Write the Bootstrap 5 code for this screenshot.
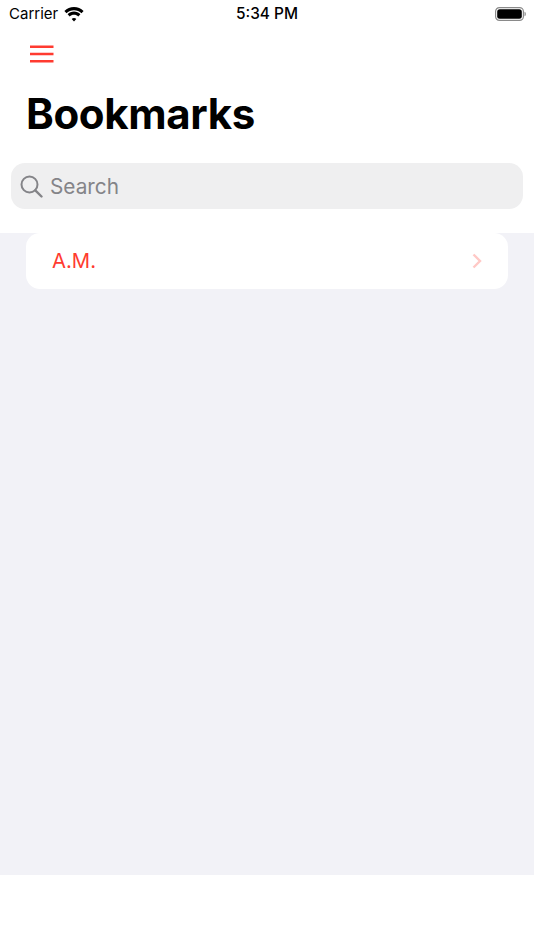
<!DOCTYPE html>
<html lang="en">
<head>
<meta charset="utf-8">
<title>Bookmarks</title>
<link href="https://cdn.jsdelivr.net/npm/bootstrap@5.3.0/dist/css/bootstrap.min.css" rel="stylesheet">
<style>
html,body{height:100%;margin:0;background:#fff;font-family:Inter,"Liberation Sans",sans-serif;overflow:hidden}
.app-frame{width:534px;height:950px}
.status-row{height:28px;padding:0 8px 0 9px;position:relative;color:#000}
.carrier{font-size:15px;line-height:28px}
.wifi-gap{gap:6px}
.clock{font-size:15.4px;font-weight:500;line-height:28px;position:absolute;left:0;right:0;text-align:center}
.menu-row{height:52px;padding:0 0 0 30px}
.title-text{font-size:42px;font-weight:700;line-height:50px;letter-spacing:-.35px;margin:0 0 0 26px;padding-top:9px;color:#000;height:83px}
.search-shell{margin:0 11px 24px;height:46px;background:#efeff0;border-radius:14px;padding-left:9px;color:#848488;font-size:20.8px}
.search-gap{gap:7px}
.search-label{padding-top:2px}
.list-zone{height:642px;background:#f2f2f7;padding:0 26px}
.bookmark-item{height:56px;background:#fff;border-radius:14px;padding:0 26px 0 26px;color:#ff3b30;font-size:20.3px}
.item-label{padding-top:1px}
.bottom-zone{height:75px;background:#fff}
</style>
</head>
<body>
<div class="app-frame d-flex flex-column">
  <div class="status-row d-flex align-items-center justify-content-between">
    <div class="d-flex align-items-center wifi-gap">
      <span class="carrier">Carrier</span>
      <svg width="20" height="15" viewBox="0 0 20 15" aria-hidden="true"><path d="M10 3.200c2.900 0 5.500 1.100 7.500 3L19.600 4C17 1.500 13.700 0 10 0S3 1.500.4 4l2.100 2.200c2-1.900 4.600-3 7.500-3z M10 7.700c1.700 0 3.200.6 4.300 1.700l2.100-2.200C14.700 5.600 12.500 4.600 10 4.600S5.300 5.600 3.600 7.200l2.100 2.200C6.800 8.300 8.300 7.700 10 7.700z M10 11c-.9 0-1.700.4-2.300.9l2.300 2.500 2.300-2.500c-.6-.5-1.400-.9-2.300-.9z" fill="#000"/></svg>
    </div>
    <span class="clock">5:34 PM</span>
    <svg width="31" height="14" viewBox="0 0 31 14" aria-hidden="true"><rect x=".6" y=".6" width="27.800" height="12.800" rx="3.800" fill="none" stroke="#8a8a8a" stroke-width="1.200"/><rect x="2.200" y="2.200" width="24.600" height="9.600" rx="2.500" fill="#000"/><path d="M29.500 4.800c.9.300 1.300 1.100 1.300 2.200s-.4 1.900-1.300 2.200z" fill="#8a8a8a"/></svg>
  </div>
  <div class="menu-row d-flex align-items-center">
    <svg width="24" height="18" viewBox="0 0 24 18" aria-hidden="true"><path d="M0 1.800h23.500M0 9h23.500M0 16.200h23.500" stroke="#ff3b30" stroke-width="2.400"/></svg>
  </div>
  <h1 class="title-text">Bookmarks</h1>
  <div class="search-shell d-flex align-items-center search-gap">
    <svg width="23" height="23" viewBox="0 0 23 23" aria-hidden="true"><circle cx="9.500" cy="9.500" r="8" fill="none" stroke="#848488" stroke-width="2"/><path d="M15.300 15.300l6.200 6.200" stroke="#848488" stroke-width="2.400" stroke-linecap="round"/></svg>
    <span class="search-label">Search</span>
  </div>
  <div class="list-zone">
    <div class="bookmark-item d-flex align-items-center justify-content-between">
      <span class="item-label">A.M.</span>
      <svg width="10" height="16" viewBox="0 0 10 16" aria-hidden="true"><path d="M1.500 1.500L8 8l-6.500 6.500" fill="none" stroke="#ffc9c6" stroke-width="2.400"/></svg>
    </div>
  </div>
  <div class="bottom-zone"></div>
</div>
<script src="https://cdn.jsdelivr.net/npm/bootstrap@5.3.0/dist/js/bootstrap.bundle.min.js"></script>
</body>
</html>
